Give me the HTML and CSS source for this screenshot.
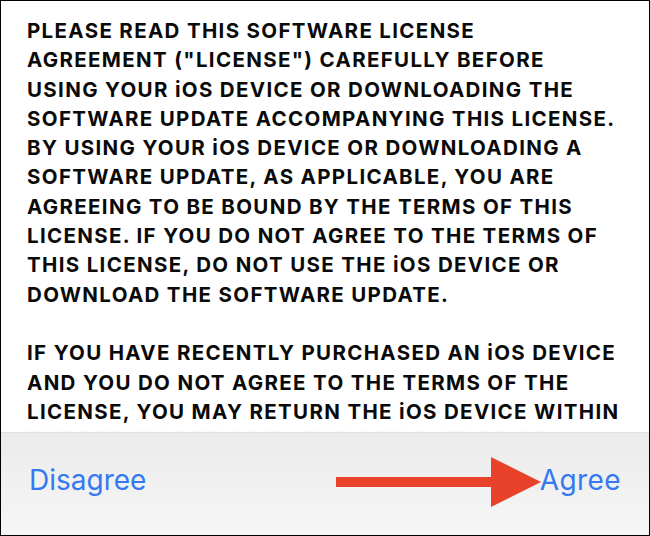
FILE: index.html
```html
<!DOCTYPE html>
<html lang="en">
<head>
<meta charset="utf-8">
<title>License Agreement</title>
<link rel="stylesheet" href="styles.css">
</head>
<body>
<div class="screen">
  <div class="license">
    <p>PLEASE READ THIS SOFTWARE LICENSE<br>AGREEMENT ("LICENSE") CAREFULLY BEFORE<br>USING YOUR iOS DEVICE OR DOWNLOADING THE<br>SOFTWARE UPDATE ACCOMPANYING THIS LICENSE.<br>BY USING YOUR iOS DEVICE OR DOWNLOADING A<br>SOFTWARE UPDATE, AS APPLICABLE, YOU ARE<br>AGREEING TO BE BOUND BY THE TERMS OF THIS<br>LICENSE. IF YOU DO NOT AGREE TO THE TERMS OF<br>THIS LICENSE, DO NOT USE THE iOS DEVICE OR<br>DOWNLOAD THE SOFTWARE UPDATE.</p>
    <p>IF YOU HAVE RECENTLY PURCHASED AN iOS DEVICE<br>AND YOU DO NOT AGREE TO THE TERMS OF THE<br>LICENSE, YOU MAY RETURN THE iOS DEVICE WITHIN<br><span class="faded">THE RETURN PERIOD TO THE APPLE STORE OR</span></p>
  </div>
  <div class="toolbar">
    <button class="action">Disagree</button>
    <button class="action agree">Agree</button>
  </div>
  <svg class="arrow" width="210" height="52" viewBox="0 0 210 52" aria-hidden="true">
    <rect x="0" y="20" width="160" height="10" fill="#e8432a"/>
    <polygon points="155,0 205,25 155,50" fill="#e8432a"/>
  </svg>
</div>
</body>
</html>
```

FILE: styles.css
```css
* { box-sizing: border-box; }
html, body { margin: 0; padding: 0; background: #fff; }
.screen {
  position: relative;
  width: 650px;
  height: 536px;
  overflow: hidden;
  border: 1.5px solid #000;
  background: #fff;
  font-family: Inter, "Noto Sans", sans-serif;
}
.license {
  padding: 15px 20px 0 26px;
  color: #0a0a0a;
  font-weight: 700;
  font-size: 20.5px;
  line-height: 29.3px;
  letter-spacing: 1.33px;
}
.license p { margin: 0 0 29.3px; white-space: nowrap; }
.faded { color: #a8a8a8; filter: blur(1px); }
.toolbar {
  position: absolute;
  left: 0;
  right: 0;
  bottom: 0;
  height: 103px;
  display: flex;
  justify-content: space-between;
  align-items: center;
  padding: 0 28px 8px 28px;
  background: linear-gradient(#ebebeb, #f6f6f6);
  border-top: 1px solid #e0e0e0;
}
.action {
  border: 0;
  background: none;
  padding: 0;
  font-family: Inter, "Noto Sans", sans-serif;
  font-size: 28px;
  font-weight: 400;
  color: #3479f2;
}
.agree { letter-spacing: 0.4px; }
.arrow {
  position: absolute;
  left: 335px;
  top: 456px;
}
```
